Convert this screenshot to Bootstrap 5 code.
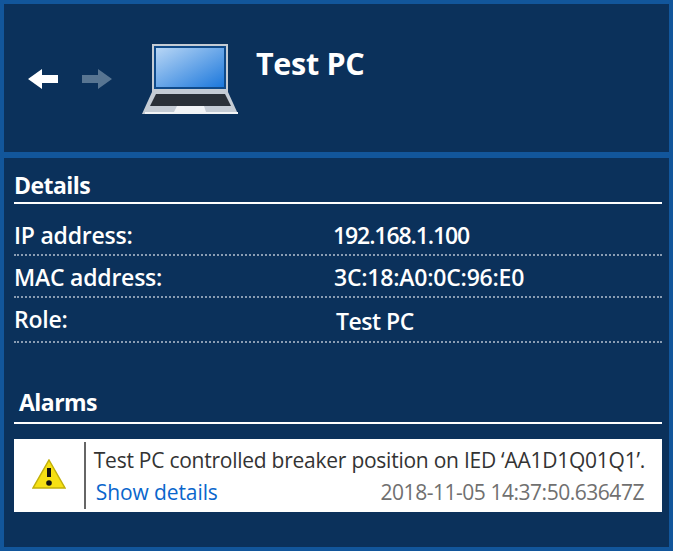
<!DOCTYPE html>
<html lang="en">
<head>
  <meta charset="UTF-8" />
  <title>Test PC</title>
  <link href="https://cdn.jsdelivr.net/npm/bootstrap@5.3.0/dist/css/bootstrap.min.css" rel="stylesheet">
  <style>
    html, body { height: 100%; }
    body {
      background-color: #12569b;
      font-family: "Open Sans", "Noto Sans", sans-serif;
      color: #fff;
      overflow: hidden;
    }
    .app-shell { height: 551px; padding: 4px; gap: 6px; }
    .head-panel { height: 148px; background-color: #0b315b; padding-left: 24px; }
    .nav-arrows { gap: 24px; margin-top: 2px; }
    .pc-icon { margin-left: 30px; margin-top: 2px; }
    .pc-title { font-size: 30.5px; font-weight: 700; margin: -30px 0 0 18px; line-height: 1; letter-spacing: -.3px; }
    .body-panel { flex: 1; background-color: #0b315b; padding: 14px 7px 0 10px; }
    .sect-title { font-size: 23px; font-weight: 700; line-height: 27px; border-bottom: 2px solid #fff; height: 32px; letter-spacing: -.55px; }
    .alarm-title { margin-top: 46px; height: 35px; line-height: 26px; }
    .alarm-title span { padding-left: 5px; }
    .info-row { border-bottom: 2px dotted #8a9db3; font-size: 23px; font-weight: 600; height: 42px; align-items: center; padding-top: 3px; letter-spacing: -.22px; }
    .info-row.first { height: 52px; padding-top: 13px; }
    .info-row.last { height: 45px; padding-top: 0; }
    .info-key { width: 320px; }
    .val-ip { letter-spacing: -1.1px; margin-left: -1px; }
    .val-role { letter-spacing: -.5px; padding: 4px 0 0 2px; }
    .alarm-card { margin-top: 15px; background: #fff; height: 73px; color: #333; }
    .alarm-icon { width: 70px; padding-bottom: 3px; }
    .alarm-text { border-left: 2px solid #666; margin: 3px 0; padding: 3px 17px 0 8px; font-size: 21px; flex: 1; }
    .alarm-msg { line-height: 30px; letter-spacing: -.25px; white-space: nowrap; }
    .alarm-foot { line-height: 34px; }
    .alarm-foot a { color: #0a66cc; text-decoration: none; padding-left: 2px; letter-spacing: -.1px; }
    .alarm-time { color: #707070; letter-spacing: -.47px; padding-right: 1px; }
  </style>
</head>
<body>
  <div class="app-shell d-flex flex-column">

    <!-- Header -->
    <div class="head-panel d-flex align-items-center">
      <div class="nav-arrows d-flex">
        <svg width="30" height="20" viewBox="0 0 30 20"><polygon points="0,10 14,0 14,6 30,6 30,14 14,14 14,20" fill="#fff"/></svg>
        <svg width="30" height="20" viewBox="0 0 30 20"><polygon points="30,10 16,0 16,6 0,6 0,14 16,14 16,20" fill="#587592"/></svg>
      </div>
      <svg class="pc-icon" width="96" height="70" viewBox="0 0 96 70">
        <defs>
          <linearGradient id="screenFill" x1="0" y1="0" x2="1" y2="1">
            <stop offset="0" stop-color="#b8d6f5"/>
            <stop offset="1" stop-color="#1c78dc"/>
          </linearGradient>
        </defs>
        <rect x="10" y="0" width="76" height="50" fill="#c5ccd4"/>
        <rect x="12" y="2" width="72" height="43" fill="#0f4a8a"/>
        <rect x="14" y="4" width="68" height="39" fill="url(#screenFill)"/>
        <polygon points="10,48 86,48 96,70 0,70" fill="#c5ccd4"/>
        <polygon points="14,50 83,50 89,62 8,62" fill="#2b3138"/>
        <polygon points="35,62 62,62 64,68 32,68" fill="#f2f4f6"/>
        <rect x="3" y="68" width="93" height="2" fill="#f2f4f6"/>
      </svg>
      <div class="pc-title">Test PC</div>
    </div>

    <!-- Details and alarms -->
    <div class="body-panel">
      <div class="sect-title"><span>Details</span></div>
      <div class="info-row first d-flex"><div class="info-key">IP address:</div><div class="val-ip">192.168.1.100</div></div>
      <div class="info-row d-flex"><div class="info-key">MAC address:</div><div>3C:18:A0:0C:96:E0</div></div>
      <div class="info-row last d-flex"><div class="info-key">Role:</div><div class="val-role">Test PC</div></div>

      <div class="sect-title alarm-title"><span>Alarms</span></div>
      <div class="alarm-card d-flex">
        <div class="alarm-icon d-flex align-items-center justify-content-center">
          <svg width="34" height="30" viewBox="0 0 34 30">
            <polygon points="17,1 33,29 1,29" fill="#f6e013" stroke="#c2b00a" stroke-width="1.5"/>
            <rect x="15" y="9" width="4" height="9" fill="#111"/>
            <circle cx="17" cy="24" r="2.8" fill="#111"/>
          </svg>
        </div>
        <div class="alarm-text">
          <div class="alarm-msg">Test PC controlled breaker position on IED ‘AA1D1Q01Q1’.</div>
          <div class="alarm-foot d-flex justify-content-between">
            <a href="#">Show details</a>
            <span class="alarm-time">2018-11-05 14:37:50.63647Z</span>
          </div>
        </div>
      </div>
    </div>

  </div>
  <script src="https://cdn.jsdelivr.net/npm/bootstrap@5.3.0/dist/js/bootstrap.bundle.min.js"></script>
</body>
</html>
